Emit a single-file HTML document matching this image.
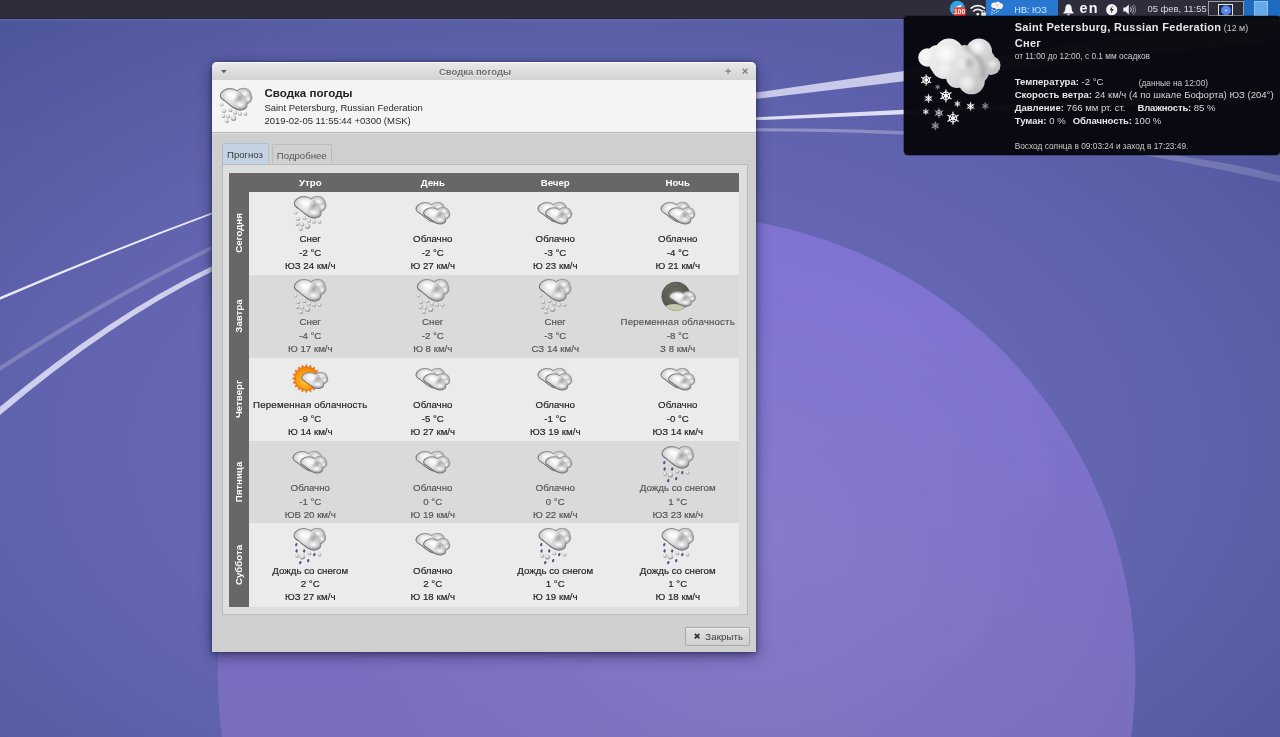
<!DOCTYPE html>
<html lang="ru">
<head>
<meta charset="utf-8">
<title>Сводка погоды</title>
<style>
*{box-sizing:border-box;margin:0;padding:0}
html,body{width:1280px;height:737px;overflow:hidden;background:#5a5ea8}
body{position:relative;font-family:"Liberation Sans","DejaVu Sans",sans-serif;font-size:9.6px;color:#222}
#bg{position:absolute;left:0;top:0;width:1280px;height:737px}
svg{display:block}
/* panel */
#panel{will-change:transform;position:absolute;left:0;top:0;width:1280px;height:19px;background:#2d2d3b;border-bottom:1.2px solid #25254a;color:#e6e6ee}
#panel .hl{position:absolute;left:986px;top:0;width:72px;height:15.5px;background:#2878d2}
#panel .t{position:absolute;white-space:nowrap;line-height:1}
#panel svg{position:absolute;overflow:visible}
/* tooltip */
#tip{will-change:transform;position:absolute;left:904px;top:16px;width:375.5px;height:138.5px;background:rgba(7,7,13,.975);border-radius:4px;color:#d6d6d6;box-shadow:0 0 0 .6px rgba(10,10,40,.6)}
#tip .l{position:absolute;left:110.7px;white-space:nowrap;font-size:9.55px;line-height:12px}
#tip .s{font-size:8.32px;color:#cbcbcb}
#tip b{color:#e6e6e6}
#tip svg{position:absolute;overflow:visible}
/* window */
#win{position:absolute;left:212px;top:62px;width:544px;height:590px;background:#cfcfcf;border-radius:5px 5px 0 0;box-shadow:0 4px 14px rgba(15,15,50,.5),0 1px 5px rgba(15,15,50,.35),0 0 1.5px rgba(20,20,60,.55);will-change:transform}
#tb{position:absolute;left:0;top:0;width:544px;height:18px;border-radius:5px 5px 0 0;background:linear-gradient(#e8e8e8,#d3d3d3);border-top:1px solid #fbfbfb}
#tb .ttl{position:absolute;left:0;width:526px;top:3px;text-align:center;font-weight:bold;font-size:9.5px;line-height:11px;color:#6e6e6e;text-shadow:0 1px 0 rgba(255,255,255,.6)}
#tb svg{position:absolute;overflow:visible}
#hd{position:absolute;left:0;top:18px;width:544px;height:53.2px;background:#f4f4f4;border-bottom:1.2px solid #b9b9b9;box-shadow:0 1px 0 rgba(255,255,255,.25)}
#hd .h1{position:absolute;left:52.4px;top:5.8px;font-weight:bold;font-size:11.6px;line-height:14px;color:#222;white-space:nowrap}
#hd .h2{position:absolute;left:52.4px;font-size:9.5px;line-height:12px;color:#2a2a2a;white-space:nowrap}
#hd svg{position:absolute;overflow:visible}
.tab{position:absolute;font-size:9.6px;line-height:12px;text-align:center;white-space:nowrap}
#tab1{left:9.5px;top:80.5px;width:47px;height:22px;background:#c3d3e3;border:1px solid #b3bfcc;border-bottom:none;border-radius:2px 2px 0 0;color:#3a3a3a;padding-top:5px}
#tab2{left:59.5px;top:82px;width:60.5px;height:20.5px;background:#d0d0d0;border:1px solid #bcbcbc;border-bottom:none;border-radius:2px 2px 0 0;color:#555;padding-top:4.5px}
#nb{position:absolute;left:9.5px;top:102.3px;width:526px;height:451px;background:#dedede;border:1px solid #bababa}
#grid{position:absolute;left:17px;top:110.5px;width:510px;height:434px;background:#676767}
.ch{position:absolute;top:0;height:19.2px;line-height:19.2px;width:122.5px;text-align:center;color:#fff;font-weight:bold;font-size:9.7px}
.row{position:absolute;left:20px;width:490px;height:83.6px}
.row.a{background:#ebebeb;color:#1f1f1f}
.row.b{background:#dadada;color:#555}
.cell{position:absolute;top:0;width:122.5px;height:82.9px;text-align:center}
.cell svg{position:absolute;left:43.25px;top:3px;width:36px;height:36px;overflow:visible}
.cell p{-webkit-text-stroke:.18px currentColor;position:absolute;left:-10px;right:-10px;white-space:nowrap;line-height:13px;height:13px;font-size:9.7px}
.cell p.l1{top:40.8px}.cell p.l2{top:54px}.cell p.l3{top:67px}
.rl{position:absolute;left:0;width:20px;height:82.9px;color:#fff;font-weight:bold;font-size:9.7px}
.rl span{position:absolute;left:10.3px;top:50%;transform:translate(-50%,-50%) rotate(-90deg);white-space:nowrap;display:block;line-height:12px}
#close{position:absolute;left:473.3px;top:565px;width:64.5px;height:18.6px;border:1px solid #a9a9a9;border-radius:2px;background:linear-gradient(#dfdfdf,#d1d1d1);font-size:9.6px;color:#3a3a3a;line-height:12px;white-space:nowrap;box-shadow:inset 0 1px 0 rgba(255,255,255,.5)}
#close span{position:absolute;left:19px;top:2.7px;letter-spacing:.12px}
#close svg{position:absolute;left:8px;top:4.9px}
</style>
</head>
<body>
<svg id="bg" viewBox="0 0 1280 737">
<defs>
<radialGradient id="bgG" gradientUnits="userSpaceOnUse" cx="595" cy="450" r="1000" gradientTransform="translate(595 450) scale(1 .6) translate(-595 -450)">
<stop offset="0" stop-color="#6c6bba"/><stop offset=".25" stop-color="#6a69b8"/><stop offset=".5" stop-color="#6365b1"/><stop offset=".75" stop-color="#585da5"/><stop offset="1" stop-color="#495395"/>
</radialGradient>
<linearGradient id="ciG" gradientUnits="userSpaceOnUse" x1="0" y1="215" x2="0" y2="737">
<stop offset="0" stop-color="#7c70d2"/><stop offset="1" stop-color="#796dbf"/>
</linearGradient>
<radialGradient id="ciH" gradientUnits="userSpaceOnUse" cx="760" cy="540" r="440">
<stop offset="0" stop-color="#fff" stop-opacity=".085"/><stop offset="1" stop-color="#fff" stop-opacity="0"/>
</radialGradient>
<linearGradient id="bcG" gradientUnits="userSpaceOnUse" x1="756" y1="0" x2="1280" y2="0"><stop offset="0" stop-color="#fff" stop-opacity=".33"/><stop offset=".3" stop-color="#fff" stop-opacity=".25"/><stop offset="1" stop-color="#fff" stop-opacity=".15"/></linearGradient>
<linearGradient id="pshadow" x1="0" y1="0" x2="0" y2="1"><stop offset="0" stop-color="#8a86a8" stop-opacity=".32"/><stop offset="1" stop-color="#8a86a8" stop-opacity="0"/></linearGradient>
</defs>
<rect width="1280" height="737" fill="url(#bgG)"/>
<!-- swooshes, left side -->
<path d="M-2,297.9 Q109,250.4 214,211.8 L214,213.4 Q109,252.6 -2,300.7Z" fill="#f1f1fb" opacity="0.95"/>
<path d="M-2,367.2 Q109,295.3 214,244.8 L214,249 Q109,300.1 -2,372.4Z" fill="#fff" opacity="0.2"/>
<path d="M-2,408.5 Q109,315.2 214,265.2 L214,270.4 Q109,322 -2,416.7Z" fill="#d9d9f2" opacity="0.92"/>
<!-- swooshes, right of window -->
<path d="M750,93.4 L904,70.9 L1280,12 L1280,40 L904,81.3 L750,99.6 Z" fill="#c9c9ea"/>
<path d="M750,117.5 L904,109.7 L1280,90 L1280,100 L904,114.2 L750,120.4 Z" fill="#dedef4"/>
<path d="M750,128.3 C880,128 1040,134.5 1158,152.5 S1250,169.5 1282,176 L1282,182.5 C1250,176 1230,171 1158,157.5 C1040,138.5 880,131.5 750,131.3 Z" fill="url(#bcG)"/>
<circle cx="676.6" cy="674" r="458.8" fill="url(#ciG)"/>
<circle cx="676.6" cy="674" r="458.8" fill="url(#ciH)"/>
<rect x="0" y="18.5" width="1280" height="3.5" fill="url(#pshadow)"/>
</svg>

<svg width="0" height="0" style="position:absolute">
<defs>
<radialGradient id="cg" cx=".42" cy=".38" r=".62">
<stop offset="0" stop-color="#fbfbfb"/><stop offset=".4" stop-color="#e6e6e6"/><stop offset=".75" stop-color="#c9c9c9"/><stop offset="1" stop-color="#a6a6a6"/>
</radialGradient>
<linearGradient id="cs" x1="1" y1="0" x2="0" y2="1">
<stop offset="0" stop-color="#a8a8a8"/><stop offset=".5" stop-color="#808080"/><stop offset="1" stop-color="#606060"/>
</linearGradient>
<radialGradient id="lobe" cx=".5" cy=".5" r=".5">
<stop offset="0" stop-color="#fff" stop-opacity=".95"/><stop offset=".6" stop-color="#fff" stop-opacity=".4"/><stop offset="1" stop-color="#fff" stop-opacity="0"/>
</radialGradient>
<radialGradient id="shade" cx=".5" cy=".5" r=".5">
<stop offset="0" stop-color="#747474" stop-opacity=".6"/><stop offset="1" stop-color="#808080" stop-opacity="0"/>
</radialGradient>
<radialGradient id="ball" cx=".42" cy=".35" r=".7">
<stop offset="0" stop-color="#fbfbfb"/><stop offset=".45" stop-color="#d4d4d4"/><stop offset="1" stop-color="#7a7a7a"/>
</radialGradient>
<radialGradient id="moonG" cx=".45" cy=".4" r=".6">
<stop offset="0" stop-color="#6c6c62"/><stop offset=".7" stop-color="#5b5b52"/><stop offset="1" stop-color="#4a4a44"/>
</radialGradient>
<radialGradient id="sunG" cx=".42" cy=".6" r=".62">
<stop offset="0" stop-color="#ffc52a"/><stop offset=".55" stop-color="#ffa216"/><stop offset="1" stop-color="#f78500"/>
</radialGradient>
<g id="cloudshape">
<path d="M0.5,8 C0,4 5,0.3 10,0.3 C13,0.3 16,1.5 17.2,2.7 C19,0.8 21.5,0 24,0 C28,0 31,3 31.3,6.4 C32.2,8 32.2,11 30.5,13.2 C29.5,14.5 28,15 27,15.2 C27.5,17.5 26.5,19.5 25,20.5 C22,22.3 18,21.8 15.4,20.4 C12,18.5 8,15 5,12.5 C3,11.5 1,10.5 0.5,8 Z" fill="url(#cg)" stroke="url(#cs)" stroke-width="1.05" vector-effect="non-scaling-stroke"/>
<ellipse cx="19.8" cy="9.4" rx="5.4" ry="9" fill="url(#shade)" transform="rotate(38 19.8 9.4)"/>
<ellipse cx="10.5" cy="6.3" rx="7" ry="4.4" fill="url(#lobe)" transform="rotate(20 10.5 6.3)"/>
<ellipse cx="24.8" cy="5" rx="4.6" ry="3.4" fill="url(#lobe)"/>
<ellipse cx="20" cy="16.2" rx="6" ry="3.8" fill="url(#lobe)" transform="rotate(15 20 16.2)"/>
<ellipse cx="28.4" cy="10.4" rx="2.4" ry="3" fill="url(#lobe)"/>
<path d="M17.2,2.9 C20.5,4 24.5,8.5 26.8,14.8" fill="none" stroke="#8a8a8a" stroke-width=".5" opacity=".55"/>
</g>
<!-- single cloud 32x22 placed so icon box is 36x36 -->
<symbol id="i-snow" viewBox="0 0 36 36" overflow="visible">
<use href="#cloudshape" x="1.9" y="1.3"/>
<g>
<circle cx="6.1" cy="24" r="2" fill="url(#ball)"/><circle cx="12.4" cy="23.2" r="1.9" fill="url(#ball)"/><circle cx="17.1" cy="25.8" r="2" fill="url(#ball)"/>
<circle cx="22" cy="26.8" r="2" fill="url(#ball)"/><circle cx="27.5" cy="26.8" r="1.9" fill="url(#ball)"/><circle cx="5.5" cy="29" r="1.9" fill="url(#ball)"/>
<circle cx="10.1" cy="29.6" r="2" fill="url(#ball)"/><circle cx="15.6" cy="31.2" r="2.6" fill="url(#ball)"/><circle cx="8.9" cy="33.9" r="2" fill="url(#ball)"/>
<circle cx="3.6" cy="17.6" r="1.9" fill="url(#ball)" opacity=".8"/>
</g>
</symbol>
<symbol id="i-sleet" viewBox="0 0 36 36" overflow="visible">
<g transform="translate(0 1.1)">
<use href="#cloudshape" x="1.6" y="1.2"/>
<g fill="#515184">
<ellipse cx="4.3" cy="17.5" rx="1.1" ry="1.7" transform="rotate(20 4.3 17.5)"/><ellipse cx="4.6" cy="23.9" rx="1.1" ry="1.7" transform="rotate(20 4.6 23.9)"/>
<ellipse cx="12.2" cy="23.9" rx="1.1" ry="1.7" transform="rotate(20 12.2 23.9)"/><ellipse cx="22.3" cy="27.5" rx="1.1" ry="1.6" transform="rotate(20 22.3 27.5)"/>
<ellipse cx="16.2" cy="33.6" rx="1.1" ry="1.7" transform="rotate(20 16.2 33.6)"/><ellipse cx="8.3" cy="35.5" rx="1.1" ry="1.7" transform="rotate(20 8.3 35.5)"/>
</g>
<circle cx="5.2" cy="28.7" r="2" fill="url(#ball)"/><circle cx="10.4" cy="29.7" r="2.6" fill="url(#ball)"/><circle cx="17.4" cy="26.3" r="1.9" fill="url(#ball)"/><circle cx="27.5" cy="27.5" r="1.9" fill="url(#ball)"/>
</g>
</symbol>
<symbol id="i-cloudy" viewBox="0 0 36 36" overflow="visible">
<g transform="translate(.6 7.3) scale(.925 .9)"><use href="#cloudshape"/></g>
<g transform="translate(8.2 12.5) scale(.83 .76)"><use href="#cloudshape"/></g>
</symbol>
<symbol id="i-night" viewBox="0 0 36 36" overflow="visible">
<circle cx="16" cy="18.2" r="14.5" fill="url(#moonG)"/>
<path d="M5.3,28 A14.5,14.5 0 0 0 25.6,29.1 Q15.5,23.4 5.3,28Z" fill="#cfd2b6" opacity=".92"/>
<path d="M5,12 a11.5,11.5 0 0 1 13,-5.5" fill="none" stroke="#7c7c70" stroke-width="1.3" opacity=".5"/>
<g transform="translate(8.9 13.4) scale(.83 .68)"><use href="#cloudshape"/></g>
</symbol>
<symbol id="i-sun" viewBox="0 0 36 36" overflow="visible">
<path id="rays" d="M14.4,3.4 L16.15,6.54 L18.79,4.09 L19.48,7.62 L22.75,6.11 L22.32,9.68 L25.89,9.25 L24.38,12.52 L27.91,13.21 L25.46,15.85 L28.6,17.6 L25.46,19.35 L27.91,21.99 L24.38,22.68 L25.89,25.95 L22.32,25.52 L22.75,29.09 L19.48,27.58 L18.79,31.11 L16.15,28.66 L14.4,31.8 L12.65,28.66 L10.01,31.11 L9.32,27.58 L6.05,29.09 L6.48,25.52 L2.91,25.95 L4.42,22.68 L0.89,21.99 L3.34,19.35 L0.2,17.6 L3.34,15.85 L0.89,13.21 L4.42,12.52 L2.91,9.25 L6.48,9.68 L6.05,6.11 L9.32,7.62 L10.01,4.09 L12.65,6.54Z" fill="#f2820c" stroke="#cf5a12" stroke-width=".45"/>
<circle cx="14.4" cy="17.6" r="10.6" fill="url(#sunG)"/>
<g transform="translate(9.2 11.2) scale(.83 .75)"><use href="#cloudshape"/></g>
</symbol>
</defs>
</svg>

<div id="panel">
<div class="hl"></div>
<!-- messenger icon with badge -->
<svg style="left:949px;top:0" width="18" height="17" viewBox="0 0 18 17">
<circle cx="8.4" cy="8.4" r="7.6" fill="#2ba4ea"/>
<path d="M4,8.2 L12.4,4.6 L11,12.4 L8.2,10.4 L7,11.8 L6.8,9.6 Z" fill="#fff" opacity=".9"/>
<rect x="4.6" y="7.2" width="12" height="8.6" rx="1.2" fill="#ee3b2b"/>
<text x="10.6" y="14.2" font-family="Liberation Sans, sans-serif" font-size="6.6" font-weight="bold" fill="#fff" text-anchor="middle">100</text>
</svg>
<!-- wifi with lock -->
<svg style="left:970px;top:3.6px" width="17" height="13" viewBox="0 0 17 13">
<path d="M1.2,4.2 A9.6,9.6 0 0 1 14.4,4.2" fill="none" stroke="#f2f2f2" stroke-width="1.7" stroke-linecap="round"/>
<path d="M3.6,7 A6,6 0 0 1 12,7" fill="none" stroke="#f2f2f2" stroke-width="1.7" stroke-linecap="round"/>
<path d="M6,9.7 A2.8,2.8 0 0 1 9.6,9.7 L7.8,12.2 Z" fill="#f2f2f2"/>
<rect x="11.3" y="8.6" width="4.6" height="4" rx=".5" fill="#ededed"/>
<path d="M12.3,8.8 v-1 a1.3,1.3 0 0 1 2.6,0 v1" fill="none" stroke="#ededed" stroke-width=".9"/>
</svg>
<!-- weather plugin mini icon -->
<svg style="left:990px;top:1.4px" width="14.5" height="14.5" viewBox="0 0 16 16">
<path d="M1.2,4.6 C1.4,2.2 4,1 6,1.8 C7.4,.4 10.4,.6 11.4,2.4 C13.8,2.2 15.4,4.6 14,6.6 C13.8,8.6 11.4,9.4 10,8.6 C8.4,9.6 6,9 5.4,7.8 C3.2,8 1,6.8 1.2,4.6Z" fill="#f4f0ea"/>
<path d="M6.5,3.2 C8,2.6 9.6,3.4 10,4.8 C9,6 7.4,6 6.4,5.2Z" fill="#e6d3bd" opacity=".8"/>
<g fill="#e8f0fb"><circle cx="2.4" cy="9.6" r=".8"/><circle cx="4.6" cy="10.8" r=".8"/><circle cx="2.2" cy="12.4" r=".8"/><circle cx="6.8" cy="10" r=".7"/><circle cx="4.4" cy="13.6" r=".7"/><circle cx="7" cy="12.6" r=".7"/><circle cx="9.2" cy="11.2" r=".7"/><circle cx="2" cy="14.8" r=".6"/></g>
</svg>
<div class="t" style="left:1014.3px;top:5.6px;font-size:9.15px;color:#d7e6fb">НВ: ЮЗ</div>
<!-- bell -->
<svg style="left:1062.5px;top:3.5px" width="11" height="12" viewBox="0 0 11 12">
<path d="M5.5,.2 C7.7,.2 8.6,2 8.7,4.2 C8.8,6.6 9.4,7.8 10.6,8.8 L10.6,9.6 L.4,9.6 L.4,8.8 C1.6,7.8 2.2,6.6 2.3,4.2 C2.4,2 3.3,.2 5.5,.2Z" fill="#f4f4f4"/>
<path d="M4.1,10.2 h2.8 a1.4,1.4 0 0 1 -2.8,0Z" fill="#f4f4f4"/>
</svg>
<div class="t" style="left:1079.6px;top:1.1px;font-size:14.4px;font-weight:bold;color:#f6f6f6;letter-spacing:1.1px">en</div>
<!-- power -->
<svg style="left:1105.8px;top:3.8px" width="11.4" height="11.4" viewBox="0 0 11.4 11.4">
<circle cx="5.7" cy="5.7" r="5.6" fill="#f4f4f4"/>
<path d="M6.7,1.7 L3.5,6.3 L5.5,6.3 L4.7,9.7 L7.9,5.1 L5.9,5.1Z" fill="#2d2c3a"/>
</svg>
<!-- volume -->
<svg style="left:1123.3px;top:3.8px" width="13" height="11" viewBox="0 0 13 11">
<path d="M.3,3.6 H2.6 L5.8,.6 V10.4 L2.6,7.4 H.3Z" fill="#f0f0f0"/>
<path d="M7.3,3.4 A3,3 0 0 1 7.3,7.6" fill="none" stroke="#e4e4e4" stroke-width="1"/>
<path d="M8.9,1.9 A5,5 0 0 1 8.9,9.1" fill="none" stroke="#bdbdc6" stroke-width="1"/>
<path d="M10.5,.5 A7,7 0 0 1 10.5,10.5" fill="none" stroke="#8d8d9a" stroke-width="1"/>
</svg>
<div class="t" style="left:1147.4px;top:4.1px;font-size:9.45px;color:#dadae2">05 фев, 11:55</div>
<!-- pager -->
<div style="position:absolute;left:1208px;top:.8px;width:36px;height:15.6px;border:1px solid #9c9ca4;background:#2b2b38"></div>
<div style="position:absolute;left:1218px;top:4px;width:15.4px;height:12.2px;border:1.1px solid #e3e6da;background:#1b2746"></div>
<svg style="left:1219.6px;top:4.8px" width="12" height="11" viewBox="0 0 12 11"><circle cx="6" cy="5.4" r="4.9" fill="#5b87ec"/><circle cx="6" cy="5.4" r="2.1" fill="#8fb2f6" stroke="#3f6bd8" stroke-width=".7"/></svg>
<div style="position:absolute;left:1244.3px;top:0;width:36px;height:16.4px;background:#1d6cc0"></div>
<div style="position:absolute;left:1254px;top:1.4px;width:14.2px;height:14.6px;border:1px solid #8cc3f5;background:#67a8e6"></div>
</div>
<div id="tip">
<svg style="left:0;top:0" width="110" height="139" viewBox="0 0 110 139">
<defs>
<linearGradient id="ug" gradientUnits="userSpaceOnUse" x1="22" y1="24" x2="88" y2="80"><stop offset="0" stop-color="#f4f4f4"/><stop offset=".5" stop-color="#e0e0e0"/><stop offset="1" stop-color="#b4b4b4"/></linearGradient>
<radialGradient id="lb" cx=".4" cy=".36" r=".72"><stop offset="0" stop-color="#fff"/><stop offset=".45" stop-color="#f0f0f0"/><stop offset=".8" stop-color="#d4d4d4"/><stop offset="1" stop-color="#bdbdbd"/></radialGradient>
<radialGradient id="hlg" cx=".5" cy=".5" r=".5"><stop offset="0" stop-color="#fff" stop-opacity="1"/><stop offset=".5" stop-color="#fff" stop-opacity=".6"/><stop offset="1" stop-color="#fff" stop-opacity="0"/></radialGradient>
<radialGradient id="sw" cx=".5" cy=".5" r=".5"><stop offset="0" stop-color="#777" stop-opacity=".7"/><stop offset="1" stop-color="#777" stop-opacity="0"/></radialGradient>
<filter id="bf" x="-10%" y="-10%" width="120%" height="120%"><feGaussianBlur stdDeviation=".7"/></filter>
<filter id="bf2" x="-30%" y="-30%" width="160%" height="160%"><feGaussianBlur stdDeviation="2"/></filter>
<filter id="ff" x="-50%" y="-50%" width="200%" height="200%"><feGaussianBlur stdDeviation=".42"/></filter>
<g id="fl"><g stroke="#fff" stroke-width=".2" stroke-linecap="round"><path d="M0,-1V1M-.87,-.5L.87,.5M-.87,.5L.87,-.5"/></g><circle r=".62" fill="none" stroke="#fff" stroke-width=".2"/><circle r=".32" fill="#fff"/></g>
</defs>
<g filter="url(#bf)" fill="url(#ug)">
<circle cx="60.5" cy="38" r="9"/>
<circle cx="34" cy="48" r="9"/>
<circle cx="75" cy="35.5" r="13"/>
<circle cx="87" cy="49.5" r="9.5"/>
<circle cx="80" cy="44" r="11"/>
<circle cx="23.5" cy="41.5" r="9.3"/>
<circle cx="33" cy="39" r="10"/>
<circle cx="45" cy="37" r="14.5"/>
<circle cx="40" cy="50.5" r="12.5"/>
<circle cx="59" cy="51" r="14.5"/>
<circle cx="74" cy="56" r="11"/>
<circle cx="67.5" cy="65" r="13.3"/>
<circle cx="53" cy="61" r="11"/>
</g>
<g>
<path d="M60,30 C75,38 82,50 78.5,62" fill="none" stroke="#707070" stroke-width="4.5" opacity=".42" filter="url(#bf2)"/>
<circle cx="65" cy="47" r="7" fill="url(#sw)" opacity=".55"/>
<circle cx="42" cy="38" r="11" fill="url(#hlg)" opacity="0.9"/>
<circle cx="22" cy="39.5" r="6.5" fill="url(#hlg)" opacity="0.75"/>
<circle cx="73" cy="31.5" r="9" fill="url(#hlg)" opacity="0.8"/>
<circle cx="88.5" cy="48" r="5.5" fill="url(#hlg)" opacity="0.6"/>
<circle cx="63" cy="67" r="9.5" fill="url(#hlg)" opacity="0.7"/>
<circle cx="40" cy="53" r="8" fill="url(#hlg)" opacity="0.55"/>
<circle cx="58" cy="48" r="7" fill="url(#hlg)" opacity="0.35"/>
</g>
<g filter="url(#ff)">
<use href="#fl" transform="translate(22.2 64) scale(5.3)" opacity="1"/>
<use href="#fl" transform="translate(33.6 71) scale(2.4)" opacity="0.6"/>
<use href="#fl" transform="translate(41.9 79.8) scale(6)" opacity="1"/>
<use href="#fl" transform="translate(24.5 82.5) scale(4)" opacity="1"/>
<use href="#fl" transform="translate(53.4 87.8) scale(3)" opacity="1"/>
<use href="#fl" transform="translate(66.6 90.4) scale(4)" opacity="1"/>
<use href="#fl" transform="translate(81.2 89.9) scale(3.4)" opacity="0.55"/>
<use href="#fl" transform="translate(21.8 95.7) scale(3)" opacity="1"/>
<use href="#fl" transform="translate(35 97) scale(4.4)" opacity="0.7"/>
<use href="#fl" transform="translate(49 102.2) scale(6)" opacity="0.95"/>
<use href="#fl" transform="translate(31.3 109.8) scale(4)" opacity="0.6"/>
</g>
</svg>
<div class="l" style="top:5.2px"><b style="font-size:11px;letter-spacing:.29px">Saint Petersburg, Russian Federation</b><span class="s" style="font-size:8.9px"> (12 м)</span></div>
<div class="l" style="top:21.3px"><b style="font-size:11px;letter-spacing:.3px">Снег</b></div>
<div class="l s" style="top:34.1px">от 11:00 до 12:00, с 0.1 мм осадков</div>
<div class="l" style="top:60.2px"><b>Температура:</b> -2 °C<span class="s" style="position:absolute;left:124px;top:.6px">(данные на 12:00)</span></div>
<div class="l" style="top:73.3px"><b>Скорость ветра:</b> 24 км/ч (4 по шкале Бофорта) ЮЗ (204°)</div>
<div class="l" style="top:86.2px"><b>Давление:</b> 766 мм рт. ст.<b style="position:absolute;left:122.8px;letter-spacing:-.2px">Влажность:</b><span style="position:absolute;left:179px">85 %</span></div>
<div class="l" style="top:99.1px"><b>Туман:</b> 0 %<b style="position:absolute;left:58px;letter-spacing:-.1px">Облачность:</b><span style="position:absolute;left:119.6px">100 %</span></div>
<div class="l s" style="top:124.1px">Восход солнца в 09:03:24 и заход в 17:23:49.</div>
</div>
<div id="win">
 <div id="tb"><svg style="left:9.3px;top:7px" width="5.6" height="3.2" viewBox="0 0 7 4"><path d="M0,0H7L3.5,4Z" fill="#5c5c5c"/></svg><div class="ttl">Сводка погоды</div><svg style="left:512.8px;top:5.1px" width="6.2" height="6.2" viewBox="0 0 7 7"><path d="M3.5,.3V6.7M.3,3.5H6.7" stroke="#808080" stroke-width="1.3" fill="none"/></svg><svg style="left:530px;top:5.1px" width="6.2" height="6.2" viewBox="0 0 7 7"><path d="M.8,.8L6.2,6.2M6.2,.8L.8,6.2" stroke="#808080" stroke-width="1.4" fill="none"/></svg></div>
 <div id="hd"><svg style="left:6px;top:6.5px" width="36" height="36" viewBox="0 0 36 36"><use href="#i-snow"/></svg><div class="h1">Сводка погоды</div><div class="h2" style="top:21.5px">Saint Petersburg, Russian Federation</div><div class="h2" style="top:34.7px">2019-02-05 11:55:44 +0300 (MSK)</div></div>
 <div class="tab" id="tab1">Прогноз</div><div class="tab" id="tab2">Подробнее</div>
 <div id="nb"></div>
 <div id="grid">
  <div class="ch" style="left:20px">Утро</div>
  <div class="ch" style="left:142.5px">День</div>
  <div class="ch" style="left:265px">Вечер</div>
  <div class="ch" style="left:387.5px">Ночь</div>
  <div class="rl" style="top:19.2px"><span>Сегодня</span></div>
  <div class="row a" style="top:19.2px">
   <div class="cell" style="left:0px"><svg viewBox="0 0 36 36"><use href="#i-snow"/></svg><p class="l1">Снег</p><p class="l2">-2 °C</p><p class="l3">ЮЗ 24 км/ч</p></div>
   <div class="cell" style="left:122.5px"><svg viewBox="0 0 36 36"><use href="#i-cloudy"/></svg><p class="l1">Облачно</p><p class="l2">-2 °C</p><p class="l3">Ю 27 км/ч</p></div>
   <div class="cell" style="left:245px"><svg viewBox="0 0 36 36"><use href="#i-cloudy"/></svg><p class="l1">Облачно</p><p class="l2">-3 °C</p><p class="l3">Ю 23 км/ч</p></div>
   <div class="cell" style="left:367.5px"><svg viewBox="0 0 36 36"><use href="#i-cloudy"/></svg><p class="l1">Облачно</p><p class="l2">-4 °C</p><p class="l3">Ю 21 км/ч</p></div>
  </div>
  <div class="rl" style="top:102.14px"><span>Завтра</span></div>
  <div class="row b" style="top:102.14px">
   <div class="cell" style="left:0px"><svg viewBox="0 0 36 36"><use href="#i-snow"/></svg><p class="l1">Снег</p><p class="l2">-4 °C</p><p class="l3">Ю 17 км/ч</p></div>
   <div class="cell" style="left:122.5px"><svg viewBox="0 0 36 36"><use href="#i-snow"/></svg><p class="l1">Снег</p><p class="l2">-2 °C</p><p class="l3">Ю 8 км/ч</p></div>
   <div class="cell" style="left:245px"><svg viewBox="0 0 36 36"><use href="#i-snow"/></svg><p class="l1">Снег</p><p class="l2">-3 °C</p><p class="l3">СЗ 14 км/ч</p></div>
   <div class="cell" style="left:367.5px"><svg viewBox="0 0 36 36"><use href="#i-night"/></svg><p class="l1" style="letter-spacing:.18px">Переменная облачность</p><p class="l2">-8 °C</p><p class="l3">З 8 км/ч</p></div>
  </div>
  <div class="rl" style="top:185.08px"><span>Четверг</span></div>
  <div class="row a" style="top:185.08px">
   <div class="cell" style="left:0px"><svg viewBox="0 0 36 36"><use href="#i-sun"/></svg><p class="l1" style="letter-spacing:.18px">Переменная облачность</p><p class="l2">-9 °C</p><p class="l3">Ю 14 км/ч</p></div>
   <div class="cell" style="left:122.5px"><svg viewBox="0 0 36 36"><use href="#i-cloudy"/></svg><p class="l1">Облачно</p><p class="l2">-5 °C</p><p class="l3">Ю 27 км/ч</p></div>
   <div class="cell" style="left:245px"><svg viewBox="0 0 36 36"><use href="#i-cloudy"/></svg><p class="l1">Облачно</p><p class="l2">-1 °C</p><p class="l3">ЮЗ 19 км/ч</p></div>
   <div class="cell" style="left:367.5px"><svg viewBox="0 0 36 36"><use href="#i-cloudy"/></svg><p class="l1">Облачно</p><p class="l2">-0 °C</p><p class="l3">ЮЗ 14 км/ч</p></div>
  </div>
  <div class="rl" style="top:268.02px"><span>Пятница</span></div>
  <div class="row b" style="top:268.02px">
   <div class="cell" style="left:0px"><svg viewBox="0 0 36 36"><use href="#i-cloudy"/></svg><p class="l1">Облачно</p><p class="l2">-1 °C</p><p class="l3">ЮВ 20 км/ч</p></div>
   <div class="cell" style="left:122.5px"><svg viewBox="0 0 36 36"><use href="#i-cloudy"/></svg><p class="l1">Облачно</p><p class="l2">0 °C</p><p class="l3">Ю 19 км/ч</p></div>
   <div class="cell" style="left:245px"><svg viewBox="0 0 36 36"><use href="#i-cloudy"/></svg><p class="l1">Облачно</p><p class="l2">0 °C</p><p class="l3">Ю 22 км/ч</p></div>
   <div class="cell" style="left:367.5px"><svg viewBox="0 0 36 36"><use href="#i-sleet"/></svg><p class="l1">Дождь со снегом</p><p class="l2">1 °C</p><p class="l3">ЮЗ 23 км/ч</p></div>
  </div>
  <div class="rl" style="top:350.96px"><span>Суббота</span></div>
  <div class="row a" style="top:350.96px">
   <div class="cell" style="left:0px"><svg viewBox="0 0 36 36"><use href="#i-sleet"/></svg><p class="l1">Дождь со снегом</p><p class="l2">2 °C</p><p class="l3">ЮЗ 27 км/ч</p></div>
   <div class="cell" style="left:122.5px"><svg viewBox="0 0 36 36"><use href="#i-cloudy"/></svg><p class="l1">Облачно</p><p class="l2">2 °C</p><p class="l3">Ю 18 км/ч</p></div>
   <div class="cell" style="left:245px"><svg viewBox="0 0 36 36"><use href="#i-sleet"/></svg><p class="l1">Дождь со снегом</p><p class="l2">1 °C</p><p class="l3">Ю 19 км/ч</p></div>
   <div class="cell" style="left:367.5px"><svg viewBox="0 0 36 36"><use href="#i-sleet"/></svg><p class="l1">Дождь со снегом</p><p class="l2">1 °C</p><p class="l3">Ю 18 км/ч</p></div>
  </div>
 </div>
 <div id="close"><svg width="6.2" height="6.2" viewBox="0 0 7 7"><path d="M.9,.9L6.1,6.1M6.1,.9L.9,6.1" stroke="#333" stroke-width="2" fill="none"/></svg><span>Закрыть</span></div>
</div>
</body>
</html>
